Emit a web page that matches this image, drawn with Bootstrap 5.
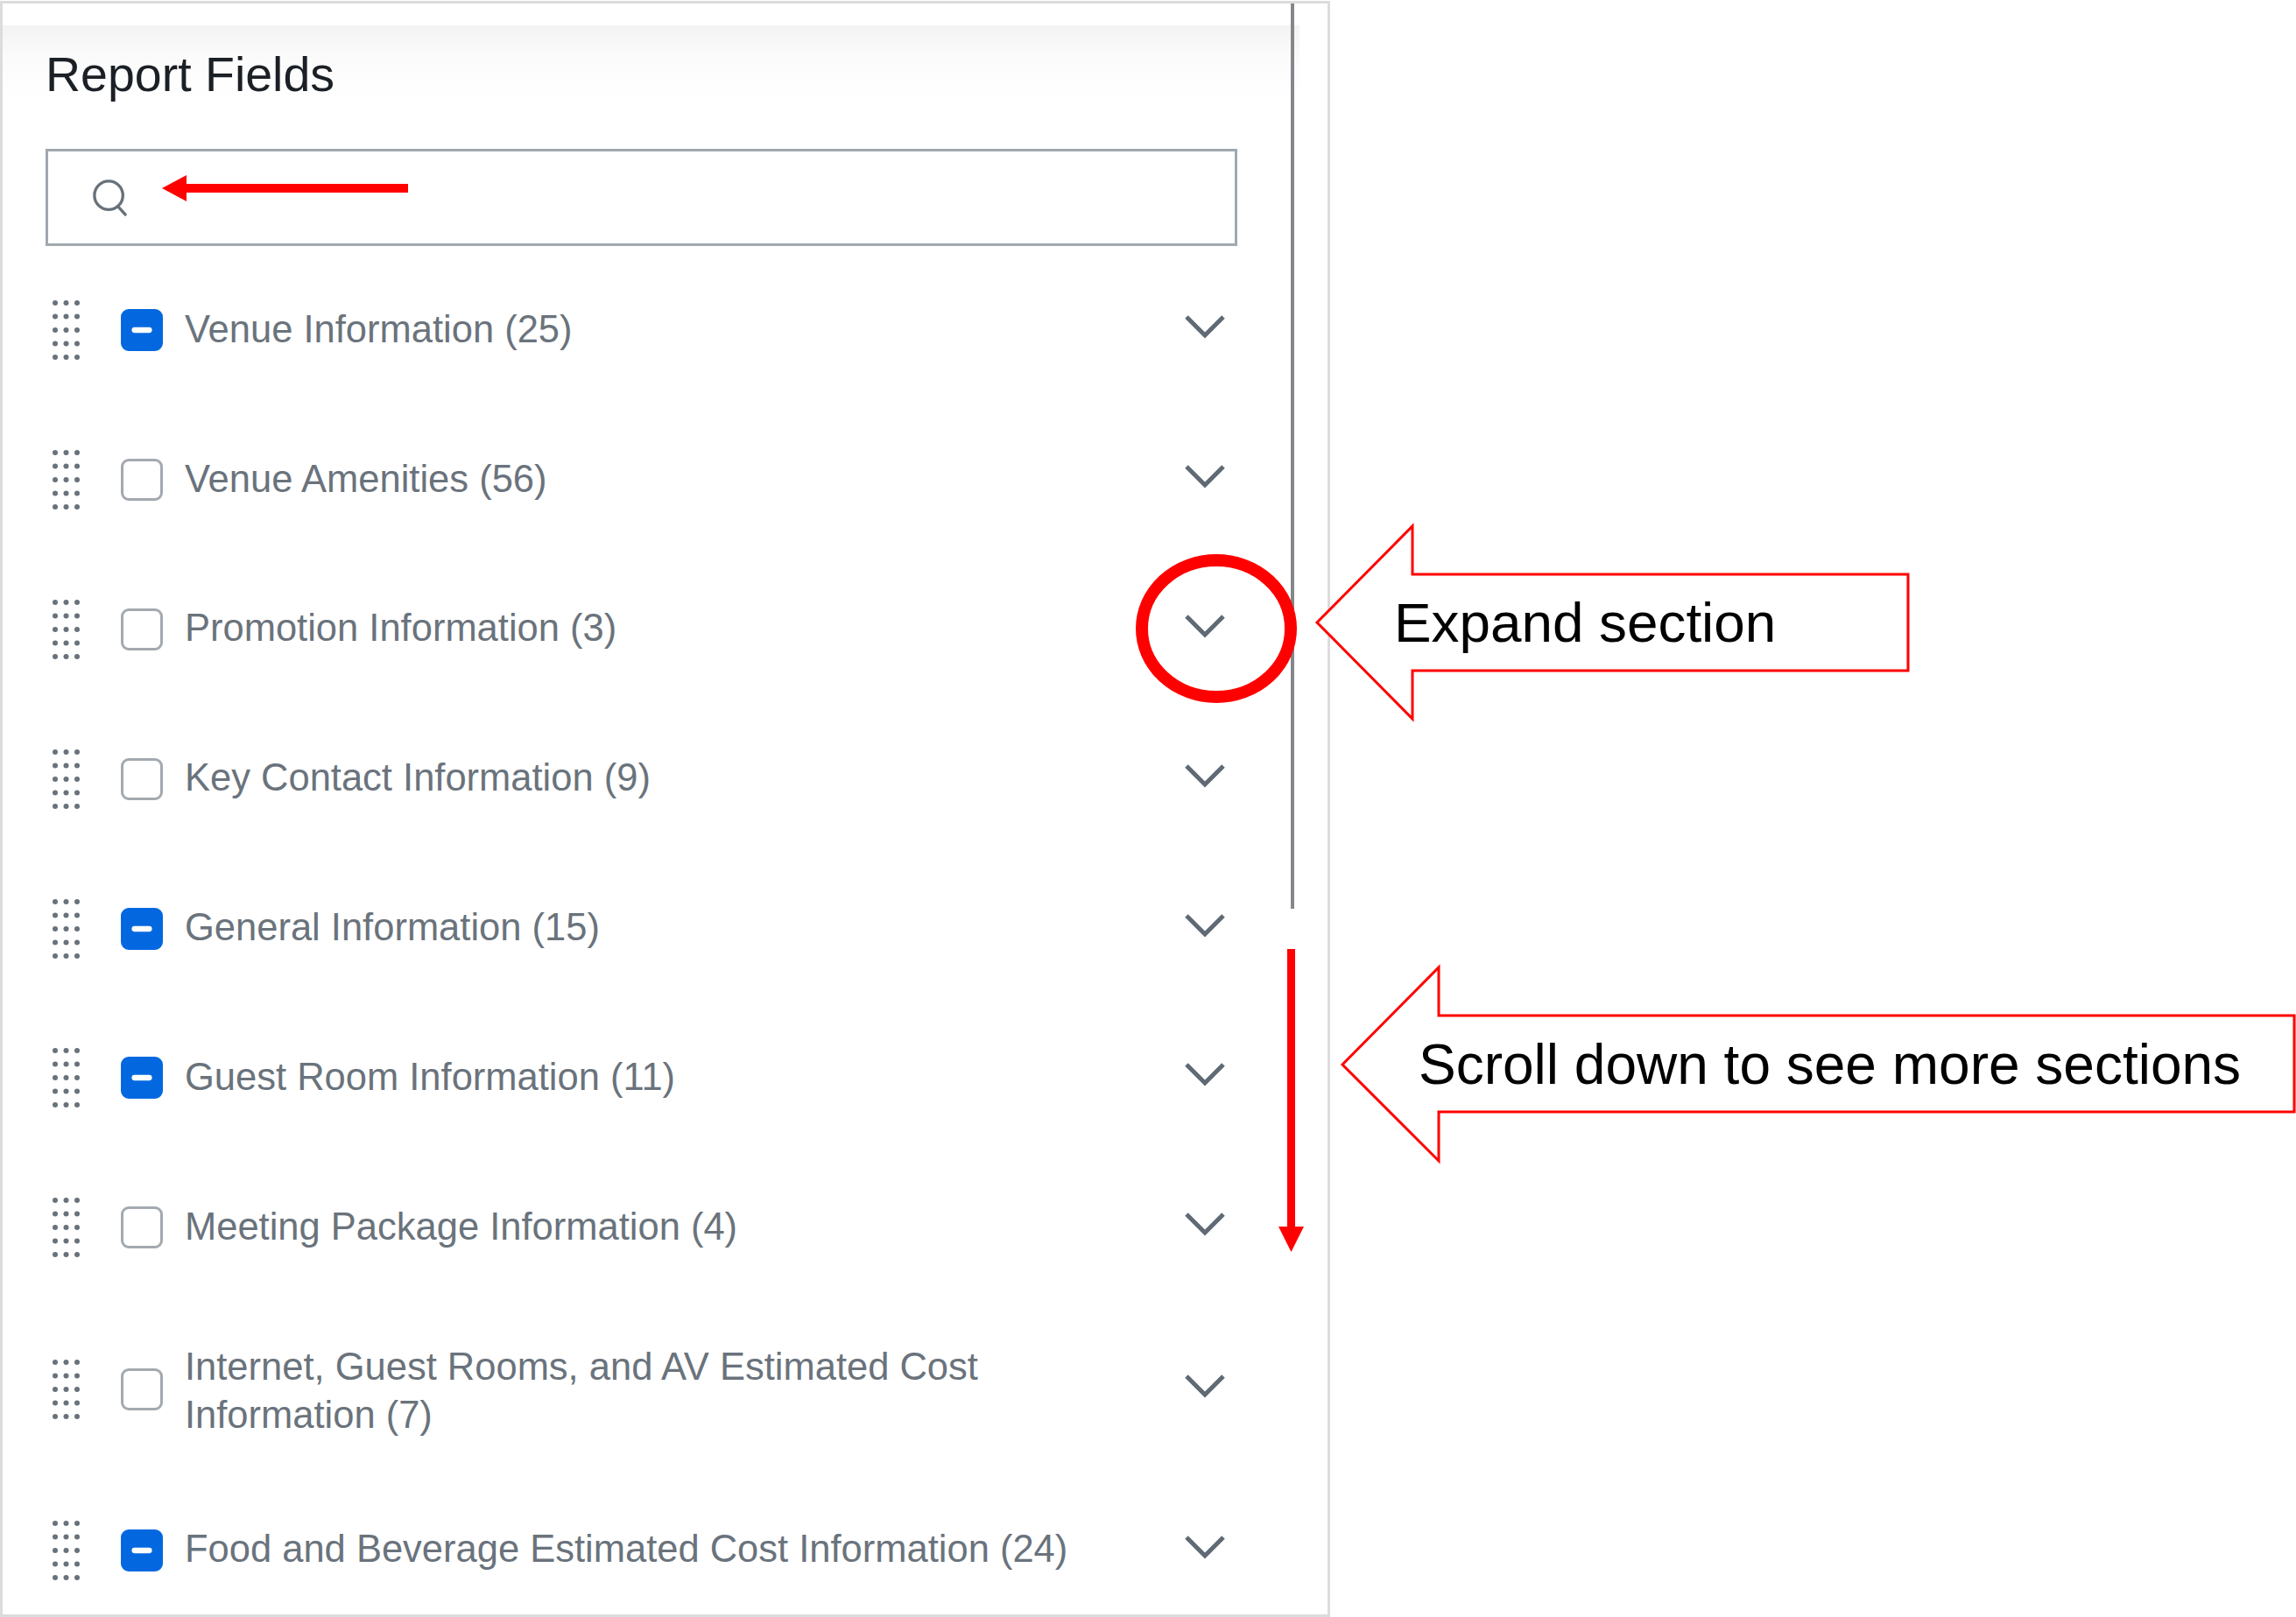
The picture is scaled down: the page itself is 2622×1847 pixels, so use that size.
<!DOCTYPE html>
<html lang="en">
  <head>
    <meta charset="UTF-8" />
    <title>Report Fields</title>
    <meta name="viewport" content="width=device-width, initial-scale=1.0" />
    <link
      href="https://cdn.jsdelivr.net/npm/bootstrap@5.3.3/dist/css/bootstrap.min.css"
      rel="stylesheet"
    />
    <style>
      html,
      body {
        width: 2622px;
        height: 1847px;
        overflow: hidden;
        background: #fff;
        font-family: "Liberation Sans", Arial, sans-serif;
      }
      .report-panel {
        width: 1519px;
        height: 1846px;
        margin-top: 1px;
        border: 3px solid #dcdcdc;
      }
      .panel-head {
        margin: 25px 32px 0 0;
        padding: 23px 0 51px 49px;
        background: linear-gradient(#f3f3f3, #fbfbfb 36px, #fff 84px);
      }
      .panel-title {
        margin: 0;
        font-size: 55.5px;
        line-height: 67px;
        font-weight: 400;
        color: #1b2026;
      }
      .search-box {
        width: 1361px;
        height: 111px;
        margin-left: 49px;
        padding-left: 50px;
        border: 3px solid #a1a8af;
      }
      .search-box input {
        font-size: 43px;
      }
      .field-list {
        width: 1361px;
        margin: 11px 0 0 49px;
      }
      .field-row {
        height: 170.8px;
        font-size: 43.5px;
        line-height: 55px;
        color: #6a737c;
      }
      .field-row.is-wrapped {
        height: 198px;
      }
      .drag-handle {
        flex: 0 0 78px;
        margin-left: 8px;
      }
      .field-row .form-check-input {
        flex: 0 0 48px;
        width: 48px;
        height: 48px;
        margin: 0 25px 0 0;
        border: 3px solid #a3a9af;
        border-radius: 9px;
      }
      .field-row .form-check-input:indeterminate {
        background-color: #0368e0;
        border-color: #0368e0;
      }
      .field-name {
        flex: 1 1 auto;
        max-width: 1020px;
        transform: translateY(-1px);
      }
      .is-wrapped .field-name {
        transform: translateY(2px);
      }
      .field-chevron {
        margin: 0 14px -4px auto;
        transform: translateY(-6px);
      }
      .scroll-thumb {
        top: 0;
        left: 1471px;
        width: 4px;
        height: 1034px;
        background: #85888b;
      }
      .notes-layer {
        top: 0;
        left: 0;
      }
      .note-text {
        font-size: 63.8px;
        line-height: 64px;
        color: #000;
        white-space: nowrap;
      }
      .note-expand {
        top: 679px;
        left: 1592px;
      }
      .note-scroll {
        top: 1184px;
        left: 1620px;
        font-size: 64px;
      }
    </style>
  </head>
  <body>
    <div class="report-panel position-relative overflow-hidden bg-white">
      <div class="panel-head">
        <h1 class="panel-title">Report Fields</h1>
      </div>

      <div class="search-box d-flex align-items-center gap-3">
        <svg width="44" height="46" viewBox="0 0 44 46" fill="none" stroke="#68717a" stroke-width="3.5">
          <circle cx="20" cy="20" r="17" />
          <path d="M31 33l9 10" stroke-linecap="round" />
        </svg>
        <input class="form-control border-0 rounded-0 shadow-none" type="text" aria-label="Search" />
      </div>

      <div class="field-list" id="field-list"></div>

      <div class="scroll-thumb position-absolute"></div>
    </div>

    <svg class="notes-layer position-absolute" width="2622" height="1847" viewBox="0 0 2622 1847" fill="none">
      <!-- search arrow -->
      <path d="M185 215l28-15v10h253v10H213v10z" fill="#f00" />
      <!-- circle round the chevron -->
      <ellipse cx="1389" cy="718" rx="85" ry="78" stroke="#f00" stroke-width="14" />
      <!-- callouts -->
      <path d="M1504 711l109-110v55h566v110H1613v55z" fill="#fff" stroke="#f00" stroke-width="3" />
      <path d="M1533 1216l110-111v55h977v110h-977v56z" fill="#fff" stroke="#f00" stroke-width="3" />
      <!-- scroll arrow -->
      <path d="M1470 1084h9v317h10l-14.500 29-14.500-29h10z" fill="#f00" />
    </svg>

    <div class="note-text note-expand position-absolute">Expand section</div>
    <div class="note-text note-scroll position-absolute">Scroll down to see more sections</div>

    <script src="https://cdn.jsdelivr.net/npm/bootstrap@5.3.3/dist/js/bootstrap.bundle.min.js"></script>
    <script>
      const fields = [
        { name: "Venue Information (25)", partial: true },
        { name: "Venue Amenities (56)", partial: false },
        { name: "Promotion Information (3)", partial: false },
        { name: "Key Contact Information (9)", partial: false },
        { name: "General Information (15)", partial: true },
        { name: "Guest Room Information (11)", partial: true },
        { name: "Meeting Package Information (4)", partial: false },
        { name: "Internet, Guest Rooms, and AV Estimated Cost Information (7)", partial: false, wrapped: true },
        { name: "Food and Beverage Estimated Cost Information (24)", partial: true },
      ];

      // 3 x 5 grid of grip dots
      let dots = "";
      for (let r = 0; r < 5; r++) {
        for (let c = 0; c < 3; c++) {
          dots += `<circle cx="${3 + c * 12.5}" cy="${3 + r * 15.5}" r="3" />`;
        }
      }

      const list = document.getElementById("field-list");
      list.innerHTML = fields
        .map(
          (f) => `
          <div class="field-row d-flex align-items-center${f.wrapped ? " is-wrapped" : ""}">
            <div class="drag-handle">
              <svg class="d-block" width="31" height="68" viewBox="0 0 31 68" fill="#69727b">${dots}</svg>
            </div>
            <input class="form-check-input" type="checkbox" data-partial="${f.partial}" aria-label="${f.name}" />
            <div class="field-name">${f.name}</div>
            <svg class="field-chevron" width="46" height="28" viewBox="0 0 46 28" fill="none" stroke="#5f6a75" stroke-width="5">
              <path d="M2 3l21 21L44 3" />
            </svg>
          </div>`
        )
        .join("");

      list.querySelectorAll("[data-partial='true']").forEach((box) => {
        box.indeterminate = true;
      });
    </script>
  </body>
</html>
